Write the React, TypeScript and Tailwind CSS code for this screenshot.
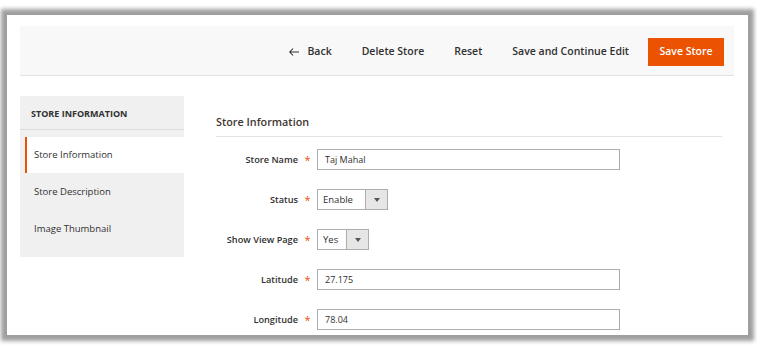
import React from "react";

const font = { fontFamily: '"Open Sans", "Noto Sans", sans-serif' };

function Req() {
  return <span className="w-[19px] text-center text-[11px] leading-none text-[#eb5202]">*</span>;
}

function Row({ label, children }: { label: string; children: React.ReactNode }) {
  return (
    <div className="flex h-[21px] items-center">
      <div className="w-[82px] text-right text-[9.2px] font-semibold text-[#303030]">{label}</div>
      <Req />
      {children}
    </div>
  );
}

function TextInput({ value }: { value: string }) {
  return (
    <div className="flex h-[21px] w-[303px] items-center border border-[#adadad] bg-white pl-[7px] text-[9px] text-[#303030]">
      {value}
    </div>
  );
}

function Select({ value, w }: { value: string; w: number }) {
  return (
    <div className="flex h-[21px] items-stretch border border-[#adadad] bg-white text-[9.5px] text-[#303030]">
      <div className="flex items-center pl-[5px]" style={{ width: w }}>
        {value}
      </div>
      <div className="flex w-[22px] items-center justify-center border-l border-[#adadad] bg-[#e6e6e6]">
        <svg width="6" height="4" viewBox="0 0 6 4">
          <path d="M0 0h6L3 4z" fill="#555" />
        </svg>
      </div>
    </div>
  );
}

export default function App() {
  return (
    <div className="h-[345px] w-[757px] bg-white pl-[7px] pt-[15px]" style={font}>
      <div className="h-[320px] w-[741px] overflow-hidden bg-white pl-[13px] pr-[14px] pt-[11px] shadow-[0_0_4px_6px_rgba(0,0,0,0.38)]">
        <div className="flex h-[50px] items-center justify-end border-b border-[#e3e3e3] bg-[#f8f8f8] pr-[10px] pt-[2px] text-[10.5px] font-semibold text-[#303030]">
          <div className="flex items-center gap-[30px]">
            <span className="flex items-center gap-[8px]">
              <svg width="10" height="8" viewBox="0 0 10 8">
                <path d="M4 0.5L0.8 4L4 7.5M0.8 4H10" fill="none" stroke="#303030" strokeWidth="1.1" />
              </svg>
              Back
            </span>
            <span>Delete Store</span>
            <span>Reset</span>
            <span>Save and Continue Edit</span>
          </div>
          <div className="ml-[19px] flex h-[28px] w-[76px] items-center justify-center bg-[#eb5202] text-white">
            Save Store
          </div>
        </div>
        <div className="mt-[20px] flex">
          <div className="h-[161px] w-[164px] bg-[#f0f0f0]">
            <div className="flex h-[34px] items-center border-b border-[#dcdcdc] pl-[11px] pt-[3px] text-[9px] font-bold text-[#303030]">
              STORE INFORMATION
            </div>
            <div className="ml-[5px] mt-[7px] flex h-[36px] items-center border-l-[2px] border-[#eb5202] bg-white pl-[7px] text-[9.5px] text-[#303030]">
              Store Information
            </div>
            <div className="ml-[14px] flex h-[38px] items-center text-[9.5px] text-[#303030]">Store Description</div>
            <div className="ml-[14px] flex h-[36px] items-center text-[9.5px] text-[#303030]">Image Thumbnail</div>
          </div>
          <div className="ml-[32px] flex-1 pr-[12px]">
            <div className="mt-[18px] border-b border-[#e3e3e3] pb-[6px] text-[10.8px] font-semibold text-[#41362f]">
              Store Information
            </div>
            <div className="mt-[12px] flex flex-col gap-[19px]">
              <Row label="Store Name">
                <TextInput value="Taj Mahal" />
              </Row>
              <Row label="Status">
                <Select value="Enable" w={47} />
              </Row>
              <Row label="Show View Page">
                <Select value="Yes" w={28} />
              </Row>
              <Row label="Latitude">
                <TextInput value="27.175" />
              </Row>
              <Row label="Longitude">
                <TextInput value="78.04" />
              </Row>
            </div>
          </div>
        </div>
      </div>
    </div>
  );
}
